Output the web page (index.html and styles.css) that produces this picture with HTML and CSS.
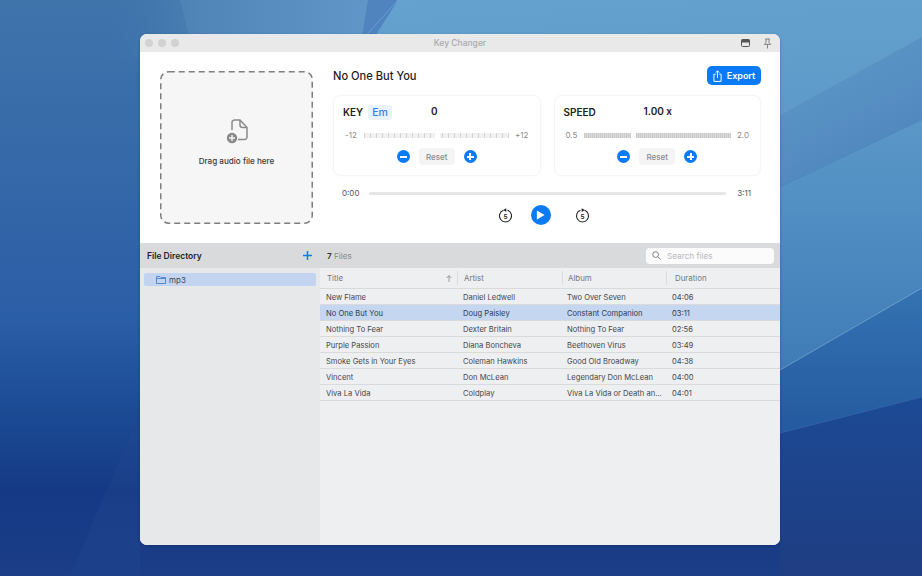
FILE: index.html
```html
<!DOCTYPE html>
<html lang="en">
<head>
<meta charset="utf-8">
<title>Key Changer</title>
<link rel="stylesheet" href="styles.css">
</head>
<body>
<svg class="wallpaper" viewBox="0 0 922 576" preserveAspectRatio="none" aria-hidden="true">
  <defs>
    <linearGradient id="bg" x1="0" y1="0" x2="0" y2="1">
      <stop offset="0" stop-color="#3f74ab"/>
      <stop offset="0.35" stop-color="#3366a8"/>
      <stop offset="0.55" stop-color="#2a5ea6"/>
      <stop offset="0.72" stop-color="#1b4a93"/>
      <stop offset="0.85" stop-color="#153a85"/>
      <stop offset="1" stop-color="#1c3d88"/>
    </linearGradient>
    <linearGradient id="topleft" x1="0" y1="0" x2="1" y2="0">
      <stop offset="0" stop-color="#3f74ab" stop-opacity="0"/>
      <stop offset="1" stop-color="#4a7fb3"/>
    </linearGradient>
    <linearGradient id="topmid" x1="0" y1="0" x2="1" y2="0">
      <stop offset="0" stop-color="#4f83b6"/>
      <stop offset="1" stop-color="#6097c8"/>
    </linearGradient>
    <linearGradient id="band1" x1="0" y1="0" x2="0.3" y2="1">
      <stop offset="0" stop-color="#66a2cf"/>
      <stop offset="1" stop-color="#5f9bca"/>
    </linearGradient>
    <linearGradient id="band2" x1="0" y1="0" x2="0.5" y2="1">
      <stop offset="0" stop-color="#5f9bc9"/>
      <stop offset="1" stop-color="#4f86bd"/>
    </linearGradient>
    <linearGradient id="band3" x1="0" y1="0" x2="0" y2="1">
      <stop offset="0" stop-color="#5b98c8"/>
      <stop offset="1" stop-color="#3f7cb7"/>
    </linearGradient>
    <linearGradient id="band4" x1="0" y1="0" x2="0" y2="1">
      <stop offset="0" stop-color="#3473b2"/>
      <stop offset="1" stop-color="#245a9f"/>
    </linearGradient>
    <linearGradient id="band5" x1="0" y1="0" x2="0" y2="1">
      <stop offset="0" stop-color="#1c4a94"/>
      <stop offset="1" stop-color="#1f3d82"/>
    </linearGradient>
  </defs>
  <rect width="922" height="576" fill="url(#bg)"/>
  <path d="M100 0H180L195 60H100Z" fill="url(#topleft)"/>
  <path d="M180 0H370L360 60H195Z" fill="url(#topmid)"/>
  <path d="M368 0H400L360 60H358Z" fill="#4f84bf"/>
  <path d="M398 0H922V37L780 115V60H360Z" fill="url(#band1)"/>
  <path d="M780 115L922 37V120L780 187Z" fill="url(#band2)"/>
  <path d="M780 187L922 120V288L780 370Z" fill="url(#band3)"/>
  <path d="M780 370L922 288V397L780 433Z" fill="url(#band4)"/>
  <path d="M780 433L922 397V576H780Z" fill="url(#band5)"/>
  <path d="M70 576L140 412V576Z" fill="#23488f" opacity=".35"/>
  <path d="M398 0L362 40" stroke="#8fc0e4" stroke-width=".6" fill="none" opacity=".7"/>
  <path d="M780 115L922 37" stroke="#86b8dd" stroke-width=".5" fill="none" opacity=".5"/>
  <path d="M780 370L922 288" stroke="#a5cdea" stroke-width=".6" fill="none" opacity=".8"/>
  <path d="M780 433L922 397" stroke="#4f86c2" stroke-width=".5" fill="none" opacity=".7"/>
</svg>

<main class="window">
  <header class="titlebar">
    <div class="lights"><i></i><i></i><i></i></div>
    <span class="app-title">Key Changer</span>
    <div class="title-icons">
      <svg width="9" height="8" viewBox="0 0 9 8"><rect x="0.5" y="0.5" width="8" height="7" rx="1" fill="none" stroke="#555"/><rect x="0.5" y="0.500" width="8" height="3" fill="#555"/></svg>
      <svg width="9" height="11" viewBox="0 0 10 12"><path d="M2.500 1h5M3.300 1v4L1.500 7h7L6.700 5V1M5 7v4.500" fill="none" stroke="#777" stroke-width="1"/></svg>
    </div>
  </header>

  <section class="top">
    <div class="dropzone">
      <svg class="dash" width="153" height="153" viewBox="0 0 153 153"><rect x=".75" y=".75" width="151.500" height="151.500" rx="8" fill="none" stroke="#7f7f7f" stroke-width="1.500" stroke-dasharray="6 4"/></svg>
      <svg width="26" height="26" viewBox="0 0 26 26" class="drop-icon">
        <path d="M7 12V4.500A2.500 2.500 0 0 1 9.500 2H15l7 7.500V19a2.500 2.500 0 0 1-2.500 2.500H13" fill="none" stroke="#8a8a8a" stroke-width="1.500"/>
        <path d="M15 2v5a2.500 2.500 0 0 0 2.500 2.500H22" fill="none" stroke="#8a8a8a" stroke-width="1.500"/>
        <circle cx="7" cy="20" r="5.200" fill="#8a8a8a"/>
        <path d="M7 17v6M4 20h6" stroke="#f6f6f7" stroke-width="1.400"/>
      </svg>
      <span>Drag audio file here</span>
    </div>

    <div class="controls">
      <div class="heading-row">
        <h1>No One But You</h1>
        <button class="export">
          <svg width="9" height="12" viewBox="0 0 10 13"><path d="M3 4.500H1v8h8v-8H7M5 8.500V1M3 2.800L5 .8 7 2.800" fill="none" stroke="#fff" stroke-width="1.100"/></svg>
          Export
        </button>
      </div>

      <div class="cards">
        <div class="card">
          <div class="card-head">
            <span class="card-label">KEY</span><span class="key-tag">Em</span>
            <span class="card-value key-value">0</span>
          </div>
          <div class="slider-row">
            <span class="end">-12</span>
            <div class="ticks sparse"><i class="thumb mid"></i></div>
            <span class="end">+12</span>
          </div>
          <div class="stepper">
            <button class="round"><b class="minus"></b></button>
            <button class="reset">Reset</button>
            <button class="round"><b class="plus"></b></button>
          </div>
        </div>
        <div class="card">
          <div class="card-head">
            <span class="card-label">SPEED</span>
            <span class="card-value speed-value">1.00 x</span>
          </div>
          <div class="slider-row">
            <span class="end">0.5</span>
            <div class="ticks dense"><i class="thumb third"></i></div>
            <span class="end">2.0</span>
          </div>
          <div class="stepper">
            <button class="round"><b class="minus"></b></button>
            <button class="reset">Reset</button>
            <button class="round"><b class="plus"></b></button>
          </div>
        </div>
      </div>

      <div class="progress">
        <span>0:00</span><div class="track"></div><span>3:11</span>
      </div>

      <div class="transport">
        <svg class="skip" width="15" height="16" viewBox="0 0 15 16"><path d="M5.500 3.300A6 6 0 1 0 9.500 3.300" fill="none" stroke="#222" stroke-width="1.100"/><path d="M8.300 1.200L5.300 3 8.300 4.900Z" fill="#222"/><text x="7.500" y="11.500" text-anchor="middle" class="skip-num">5</text></svg>
        <button class="play"><svg width="9" height="10" viewBox="0 0 10 11"><path d="M1 .5L9.500 5.500 1 10.500Z" fill="#fff"/></svg></button>
        <svg class="skip" width="15" height="16" viewBox="0 0 15 16"><path d="M9.500 3.300A6 6 0 1 1 5.500 3.300" fill="none" stroke="#222" stroke-width="1.100"/><path d="M6.700 1.200L9.700 3 6.700 4.900Z" fill="#222"/><text x="7.500" y="11.500" text-anchor="middle" class="skip-num">5</text></svg>
      </div>
    </div>
  </section>

  <section class="bottom">
    <aside class="sidebar">
      <div class="side-head">
        <strong>File Directory</strong>
        <svg width="9" height="9" viewBox="0 0 9 9"><path d="M4.500 0v9M0 4.500h9" stroke="#1279ee" stroke-width="1.500"/></svg>
      </div>
      <div class="folder">
        <svg width="10" height="8" viewBox="0 0 10 8"><path d="M.5 7.500V.5h3.500l1 1h4.500v6ZM.5 2.500h9" fill="none" stroke="#3b78c9" stroke-width=".8"/></svg>
        mp3
      </div>
    </aside>
    <div class="files">
      <div class="files-head">
        <span class="count"><b>7</b> Files</span>
        <div class="search">
          <svg width="9" height="9" viewBox="0 0 10 10"><circle cx="4" cy="4" r="3.200" fill="none" stroke="#777"/><path d="M6.400 6.400L9.500 9.500" stroke="#777"/></svg>
          <span>Search files</span>
        </div>
      </div>
      <div class="table">
        <div class="row header">
          <span class="c-title sep">Title<svg width="6" height="7" viewBox="0 0 6 7"><path d="M3 7V.8M.6 3L3 .6 5.400 3" fill="none" stroke="#888" stroke-width=".8"/></svg></span>
          <span class="c-artist sep">Artist</span>
          <span class="c-album sep">Album</span>
          <span class="c-dur">Duration</span>
        </div>
        <div class="row"><span class="c-title">New Flame</span><span class="c-artist">Daniel Ledwell</span><span class="c-album">Two Over Seven</span><span class="c-dur">04:06</span></div>
        <div class="row selected"><span class="c-title">No One But You</span><span class="c-artist">Doug Paisley</span><span class="c-album">Constant Companion</span><span class="c-dur">03:11</span></div>
        <div class="row"><span class="c-title">Nothing To Fear</span><span class="c-artist">Dexter Britain</span><span class="c-album">Nothing To Fear</span><span class="c-dur">02:56</span></div>
        <div class="row"><span class="c-title">Purple Passion</span><span class="c-artist">Diana Boncheva</span><span class="c-album">Beethoven Virus</span><span class="c-dur">03:49</span></div>
        <div class="row"><span class="c-title">Smoke Gets in Your Eyes</span><span class="c-artist">Coleman Hawkins</span><span class="c-album">Good Old Broadway</span><span class="c-dur">04:38</span></div>
        <div class="row"><span class="c-title">Vincent</span><span class="c-artist">Don McLean</span><span class="c-album">Legendary Don McLean</span><span class="c-dur">04:00</span></div>
        <div class="row"><span class="c-title">Viva La Vida</span><span class="c-artist">Coldplay</span><span class="c-album">Viva La Vida or Death an...</span><span class="c-dur">04:01</span></div>
      </div>
    </div>
  </section>
</main>
</body>
</html>
```
FILE: styles.css
```css
* { box-sizing: border-box; }
html, body { margin: 0; height: 100%; overflow: hidden; }
body { position: relative; width: 922px; height: 576px; font-family: Inter, "Liberation Sans", sans-serif; color: #222; }
button { font: inherit; border: 0; padding: 0; }
.wallpaper { position: absolute; inset: 0; width: 922px; height: 576px; display: block; }

.window { position: absolute; left: 140px; top: 34px; width: 640px; height: 511px; border-radius: 7px; overflow: hidden; background: #fff; display: flex; flex-direction: column; box-shadow: 0 1px 3px rgba(10,30,80,.35); }

.titlebar { height: 18px; flex: none; background: #e9e9ea; display: flex; align-items: center; justify-content: space-between; padding: 0 8px 0 5px; position: relative; }
.lights { display: flex; gap: 5px; }
.lights i { width: 8px; height: 8px; border-radius: 50%; background: #d2d2d3; }
.app-title { position: absolute; left: 0; right: 0; text-align: center; font-size: 8.500px; color: #a9a9aa; font-weight: 500; }
.title-icons { display: flex; gap: 13px; align-items: center; }

.top { height: 191px; flex: none; display: flex; padding: 19px 19px 0 20px; background: #fff; }
.dropzone { position: relative; width: 153px; height: 153px; flex: none; border-radius: 8px; background: #f6f6f7; display: flex; flex-direction: column; align-items: center; font-size: 8.100px; font-weight: 500; color: #3a3a3a; padding-top: 47px; }
.dash { position: absolute; left: 0; top: 0; }
.drop-icon { margin-bottom: 12px; margin-left: 3px; }

.controls { margin-left: 20px; flex: 1; min-width: 0; display: flex; flex-direction: column; }
.heading-row { height: 19px; display: flex; align-items: center; justify-content: space-between; margin-top: -5px; }
h1 { margin: 0; font-size: 11.100px; font-weight: 500; color: #1d1d1f; }
.export { width: 54px; height: 19px; border-radius: 5px; background: #0b7bf5; color: #fff; font-size: 9px; font-weight: 600; display: flex; align-items: center; justify-content: center; gap: 5px; }

.cards { display: flex; gap: 13px; margin-top: 10px; }
.card { flex: 1; height: 81px; border-radius: 8px; background: #fff; border: 1px solid #f5f5f6; box-shadow: 0 0 3px rgba(0,0,0,.03); padding: 0 11px; display: flex; flex-direction: column; }
.card-head { height: 32px; display: flex; align-items: center; position: relative; margin-left: -2px; }
.card-label { font-size: 10px; font-weight: 600; color: #222; }
.key-tag { margin-left: 5px; background: #e9f2fd; color: #2a82ee; font-size: 10.500px; font-weight: 500; padding: 1px 4px; border-radius: 3px; height: 15px; line-height: 13px; }
.card-value { position: absolute; font-size: 10px; font-weight: 600; top: 9px; }
.key-value { left: 88px; }
.speed-value { left: 80px; }

.slider-row { height: 14px; display: flex; align-items: center; gap: 6px; font-size: 8px; color: #8a8a8a; }
.end { flex: none; }
.ticks { flex: 1; height: 5px; position: relative; margin-left: 1px; }
.ticks.sparse { background-color: #f1f1f1; background-image: repeating-linear-gradient(90deg, #d4d4d4 0 1px, transparent 1px 6px); }
.ticks.dense { background-color: #dadada; background-image: repeating-linear-gradient(90deg, #c9c9c9 0 1px, transparent 1px 2px); }
.thumb { position: absolute; top: -4px; width: 5px; height: 13px; border-radius: 3px; background: #fff; box-shadow: 0 0 1px rgba(0,0,0,.08); }
.thumb.mid { left: 71px; }
.thumb.third { left: 47px; }

.stepper { display: flex; justify-content: center; align-items: center; gap: 9px; margin-top: 6px; }
.round { width: 13px; height: 13px; border-radius: 50%; background: #0b7bf5; position: relative; }
.round b { position: absolute; background: #fff; left: 3px; top: 5.500px; width: 7px; height: 2px; }
.plus::after { content: ""; position: absolute; left: 2.500px; top: -2.500px; width: 2px; height: 7px; background: #fff; }
.reset { width: 36px; height: 17px; border-radius: 4px; background: #f4f4f5; color: #8a8a8a; font-size: 8px; font-weight: 500; }

.progress { display: flex; align-items: center; margin-top: 7px; font-size: 8px; color: #555; height: 20px; padding: 0 10px 0 9px; }
.track { flex: 1; height: 3px; border-radius: 2px; background: #e6e6e7; margin: 0 11px 0 10px; }

.transport { display: flex; align-items: center; justify-content: center; margin-top: 2px; padding-right: 7px; }
.skip-num { font: 600 6.500px Inter, "Liberation Sans", sans-serif; fill: #222; }
.play { width: 20px; height: 20px; border-radius: 50%; background: #0b7bf5; margin: 0 24px 0 18px; display: flex; align-items: center; justify-content: center; }

.bottom { flex: 1; display: flex; min-height: 0; }
.sidebar { width: 180px; flex: none; background: #e7e8ea; }
.side-head { height: 25px; background: #d9dadb; display: flex; align-items: center; justify-content: space-between; padding: 0 8px 0 7px; font-size: 8.500px; color: #222; }
.side-head strong { font-weight: 600; }
.folder { margin: 5px 4px 0; height: 13px; border-radius: 2px; background: #c2d4ef; display: flex; align-items: center; gap: 3px; padding-left: 12px; font-size: 8px; color: #3f4a5c; }

.files { flex: 1; min-width: 0; background: #eeeff1; display: flex; flex-direction: column; }
.files-head { height: 25px; background: #d9dadb; display: flex; align-items: center; justify-content: space-between; padding: 0 6px 0 7px; font-size: 8.200px; color: #8a8a8c; }
.count b { color: #333; font-weight: 600; }
.search { width: 128px; height: 16px; background: #fbfbfc; border-radius: 4px; display: flex; align-items: center; gap: 6px; padding-left: 6px; color: #b9b9bb; }

.row { display: flex; height: 16px; align-items: center; border-bottom: 1px solid #d9dadc; padding-top: 1px; font-size: 7.600px; color: #47474a; }
.row.header { height: 21px; padding-top: 0; font-size: 7.900px; color: #77787a; }
.row.selected { background: #c4d6f0; color: #2d3a50; }
.row > span { white-space: nowrap; overflow: hidden; }
.c-title { width: 138px; padding-left: 6px; }
.c-artist { width: 105px; padding-left: 5px; }
.c-album { width: 104px; padding-left: 4px; }
.c-dur { flex: 1; padding-left: 5px; }
.header .c-artist { padding-left: 6px; }
.header .c-album { padding-left: 5px; }
.header .c-title { padding-left: 7px; }
.header .c-dur { padding-left: 8px; }
.sep { border-right: 1px solid #dcdddf; height: 14px; display: flex; align-items: center; justify-content: space-between; padding-right: 5px; }
```
